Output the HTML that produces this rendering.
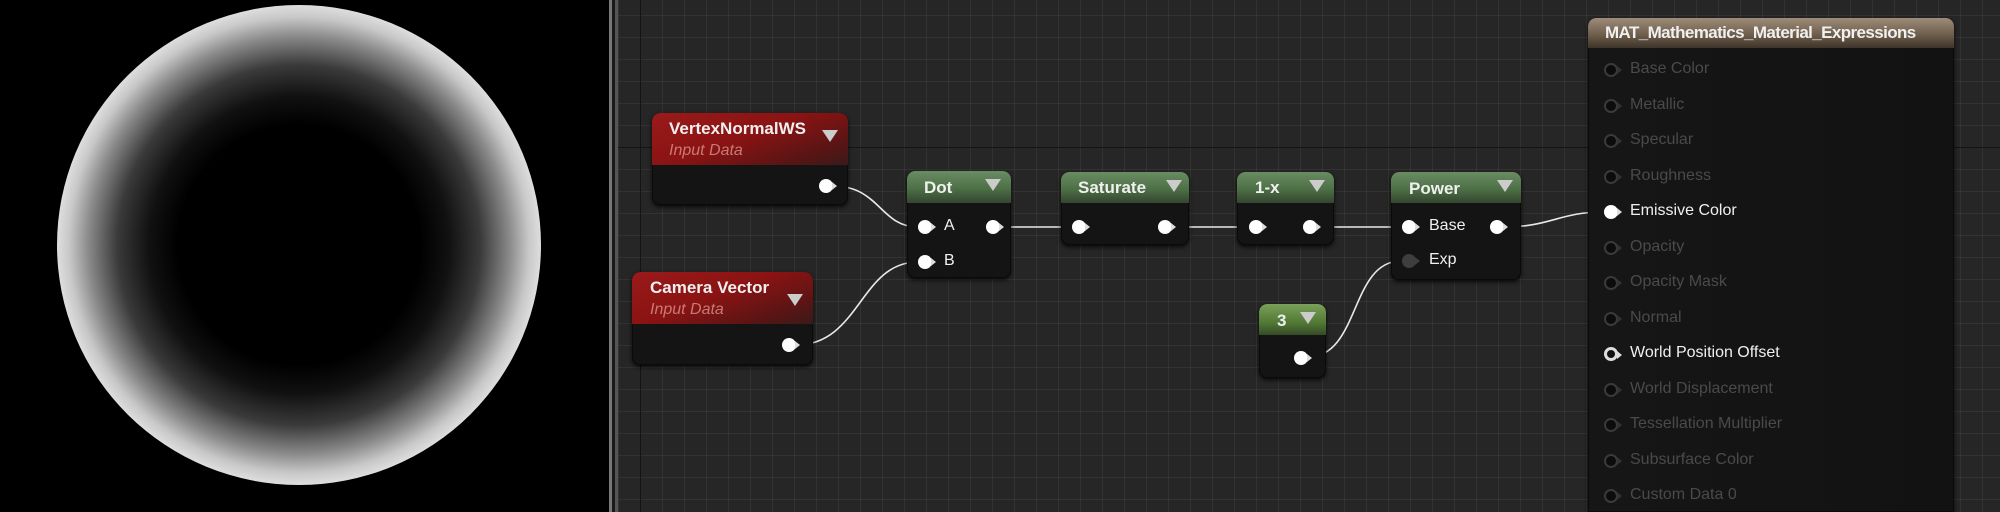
<!DOCTYPE html>
<html><head><meta charset="utf-8">
<style>
*{margin:0;padding:0;box-sizing:border-box}
html,body{width:2000px;height:512px;overflow:hidden}
body{background:#000;font-family:"Liberation Sans",sans-serif;position:relative}
#graph{position:absolute;left:618px;top:0;width:1382px;height:512px;background-color:#262626;
background-image:
linear-gradient(#141414,#141414),linear-gradient(#141414,#141414),
linear-gradient(rgba(255,255,255,0.055) 1px,transparent 1px),
linear-gradient(90deg,rgba(255,255,255,0.055) 1px,transparent 1px);
background-size:1382px 1px,1px 512px,22px 22px,22px 22px;
background-position:0 147px,22px 0,0 15px,0 0;background-repeat:no-repeat,no-repeat,repeat,repeat}
.bar1{position:absolute;left:609px;top:0;width:3px;height:512px;background:#777}
.bar2{position:absolute;left:612px;top:0;width:3px;height:512px;background:#1a1a1a}
.bar3{position:absolute;left:615px;top:0;width:3px;height:512px;background:#555}
.sphere{position:absolute;left:57px;top:5px;width:484px;height:480px;border-radius:50%;
background:radial-gradient(closest-side,#000 0%,#000 50%,#111 62%,#3a3a3a 75%,#8a8a8a 87%,#c8c8c8 95%,#dedede 100%)}
.node{position:absolute;border-radius:8px;background:#141414;box-shadow:0 2px 4px rgba(0,0,0,.8),inset 0 0 0 1px #0a0a0a;overflow:hidden}
.hd{position:absolute;left:0;top:0;right:0;border-radius:8px 8px 0 0}
.red{background:linear-gradient(160deg,#9a1a1a 0%,#8b1313 45%,#5a1414 80%,#3a1a1a 100%)}
.green{background:linear-gradient(180deg,#6a8c62 0%,#4e7046 55%,#33452f 100%)}
.green3{background:linear-gradient(180deg,#7aa05a 0%,#527a34 60%,#354a28 100%)}
.tan{background:linear-gradient(180deg,#9c8c78 0%,#6a5a48 60%,#3e342a 100%)}
.tt{position:absolute;color:#f0f0f0;font-weight:bold;font-size:17px;white-space:nowrap}
.sub{position:absolute;color:#c87a74;font-style:italic;font-size:16px;white-space:nowrap}
.tri{position:absolute;width:0;height:0;border-left:8px solid transparent;border-right:8px solid transparent;border-top:12px solid #ccc}
.pin{position:absolute;width:14px;height:14px;border-radius:50%;background:#fff}
.pin:after{content:"";position:absolute;left:13px;top:3px;border-top:4px solid transparent;border-bottom:4px solid transparent;border-left:5px solid #ddd}
.pin.off{background:#0c0c0c;border:2px solid #3a3a3a}
.pin.off:after{left:11px;top:1px;border-left-color:#333}
.pin.exp{background:#3e3e3e}
.pin.exp:after{border-left-color:#3e3e3e}
.pin.ring{background:#111;border:3px solid #ddd}
.pin.ring:after{left:10px;top:1px}
.lbl{position:absolute;color:#f0f0f0;font-size:16px;white-space:nowrap}
.mrow{position:absolute;font-size:16px;color:#4a4a4a;white-space:nowrap;left:42px}
</style></head><body>
<div class="sphere"></div>
<div class="bar1"></div><div class="bar2"></div><div class="bar3"></div>
<div id="graph"></div>

<svg style="position:absolute;left:0;top:0" width="2000" height="512">
<g fill="none" stroke="#e8e8e8" stroke-width="1.6">
<path d="M833 186 C880 186 880 227 918 227"/>
<path d="M796 345 C860 345 860 262 918 262"/>
<path d="M993 227 L1072 227"/>
<path d="M1173 227 L1248 227"/>
<path d="M1317 227 L1401 227"/>
<path d="M1308 357 C1360 357 1350 261 1401 261"/>
<path d="M1504 227 C1550 227 1560 212 1603 212"/>
</g>
</svg>

<div class="node" style="left:652px;top:113px;width:196px;height:92px">
<div class="hd red" style="height:52px"></div>
<div class="tt" style="left:17px;top:6px">VertexNormalWS</div>
<div class="sub" style="left:17px;top:29px">Input Data</div>
<div class="tri" style="left:170px;top:17px"></div>
<div class="pin" style="left:167px;top:66px"></div>
</div>

<div class="node" style="left:632px;top:272px;width:181px;height:93px">
<div class="hd red" style="height:52px"></div>
<div class="tt" style="left:18px;top:6px">Camera Vector</div>
<div class="sub" style="left:18px;top:29px">Input Data</div>
<div class="tri" style="left:155px;top:22px"></div>
<div class="pin" style="left:150px;top:66px"></div>
</div>

<div class="node" style="left:907px;top:171px;width:104px;height:107px">
<div class="hd green" style="height:32px"></div>
<div class="tt" style="left:17px;top:7px">Dot</div>
<div class="tri" style="left:78px;top:8px"></div>
<div class="pin" style="left:11px;top:49px"></div><div class="lbl" style="left:37px;top:46px">A</div>
<div class="pin" style="left:79px;top:49px"></div>
<div class="pin" style="left:11px;top:84px"></div><div class="lbl" style="left:37px;top:81px">B</div>
</div>

<div class="node" style="left:1061px;top:172px;width:128px;height:73px">
<div class="hd green" style="height:31px"></div>
<div class="tt" style="left:17px;top:6px">Saturate</div>
<div class="tri" style="left:105px;top:8px"></div>
<div class="pin" style="left:11px;top:48px"></div>
<div class="pin" style="left:97px;top:48px"></div>
</div>

<div class="node" style="left:1237px;top:172px;width:97px;height:73px">
<div class="hd green" style="height:31px"></div>
<div class="tt" style="left:18px;top:6px">1-x</div>
<div class="tri" style="left:72px;top:8px"></div>
<div class="pin" style="left:12px;top:48px"></div>
<div class="pin" style="left:66px;top:48px"></div>
</div>

<div class="node" style="left:1391px;top:172px;width:130px;height:108px">
<div class="hd green" style="height:31px"></div>
<div class="tt" style="left:18px;top:7px">Power</div>
<div class="tri" style="left:106px;top:8px"></div>
<div class="pin" style="left:11px;top:48px"></div><div class="lbl" style="left:38px;top:45px">Base</div>
<div class="pin" style="left:99px;top:48px"></div>
<div class="pin exp" style="left:11px;top:82px"></div><div class="lbl" style="left:38px;top:79px">Exp</div>
</div>

<div class="node" style="left:1259px;top:304px;width:67px;height:74px">
<div class="hd green3" style="height:31px"></div>
<div class="tt" style="left:18px;top:7px">3</div>
<div class="tri" style="left:41px;top:8px"></div>
<div class="pin" style="left:35px;top:47px"></div>
</div>

<div class="node" style="left:1588px;top:18px;width:366px;height:494px;border-radius:8px 8px 0 0;background:linear-gradient(90deg,#161616,#121212)">
<div class="hd tan" style="height:30px"></div>
<div class="tt" style="left:17px;top:5px;font-size:17px;letter-spacing:-0.6px">MAT_Mathematics_Material_Expressions</div>
<div class="pin off" style="left:16px;top:45px"></div><div class="mrow" style="top:42px">Base Color</div>
<div class="pin off" style="left:16px;top:81px"></div><div class="mrow" style="top:78px">Metallic</div>
<div class="pin off" style="left:16px;top:116px"></div><div class="mrow" style="top:113px">Specular</div>
<div class="pin off" style="left:16px;top:152px"></div><div class="mrow" style="top:149px">Roughness</div>
<div class="pin" style="left:16px;top:187px"></div><div class="mrow" style="top:184px;color:#f0f0f0">Emissive Color</div>
<div class="pin off" style="left:16px;top:223px"></div><div class="mrow" style="top:220px">Opacity</div>
<div class="pin off" style="left:16px;top:258px"></div><div class="mrow" style="top:255px">Opacity Mask</div>
<div class="pin off" style="left:16px;top:294px"></div><div class="mrow" style="top:291px">Normal</div>
<div class="pin ring" style="left:16px;top:329px"></div><div class="mrow" style="top:326px;color:#f0f0f0">World Position Offset</div>
<div class="pin off" style="left:16px;top:365px"></div><div class="mrow" style="top:362px">World Displacement</div>
<div class="pin off" style="left:16px;top:400px"></div><div class="mrow" style="top:397px">Tessellation Multiplier</div>
<div class="pin off" style="left:16px;top:436px"></div><div class="mrow" style="top:433px">Subsurface Color</div>
<div class="pin off" style="left:16px;top:471px"></div><div class="mrow" style="top:468px">Custom Data 0</div>
</div>
</body></html>
